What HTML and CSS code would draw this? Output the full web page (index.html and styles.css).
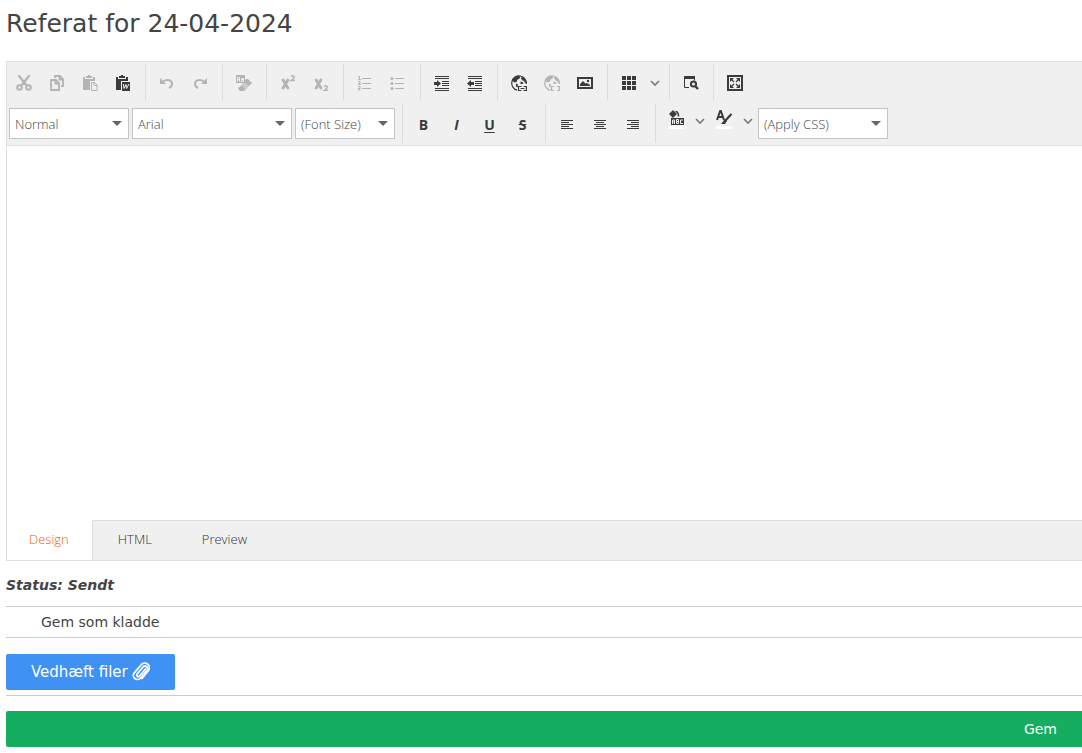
FILE: index.html
```html
<!DOCTYPE html>
<html lang="da">
<head>
    <meta charset="UTF-8">
    <meta name="viewport" content="width=device-width, initial-scale=1.0">
    <title>Referat</title>
    <link rel="stylesheet" href="styles.css">
</head>
<body>

<h1>Referat for 24-04-2024</h1>

<div class="editor">
    <div class="toolbar">
        <div class="toolbar-row">
            <div class="group first">
                <button class="tool" aria-label="Cut" disabled>
                    <svg viewBox="0 0 16 16"><path d="M2.500 0l7 9.500M13.500 0l-7 9.500" stroke-width="2.200"/><circle cx="3.500" cy="12.500" r="2.300" stroke-width="2"/><circle cx="12.500" cy="12.500" r="2.300" stroke-width="2"/><path d="M7 8.500L5 10.500M9 8.500l2 2" stroke-width="2"/></svg>
                </button>
                <button class="tool" aria-label="Copy" disabled>
                    <svg viewBox="0 0 16 16"><path d="M2 5h5l3 3v7H2zM6.500 5v3.500H10M6 3V1h5l3 3v7h-2M10.500 1v3.500H14" stroke-width="1.800"/></svg>
                </button>
                <button class="tool" aria-label="Paste" disabled>
                    <svg viewBox="0 0 16 16"><path class="solid" d="M1 2h2v2h8V2h2v4H8v9H1zM4 1h2V0h2v1h2v2H4z"/><path d="M9.500 7.500h3l2.500 2.500v5.500H9.500zM12 7.500V10.500h3"/></svg>
                </button>
                <button class="tool" aria-label="Paste from Word">
                    <svg viewBox="0 0 16 16"><path class="solid" d="M1 2h2v2h8V2h2v4H6v9H1zM4 1h2V0h2v1h2v2H4zM7 7h8v9H7z"/><path class="cut" d="M8.500 9l.5 4.500 2-4 .5 4 2.500-4.500"/></svg>
                </button>
            </div>
            <div class="group">
                <button class="tool" aria-label="Undo" disabled>
                    <svg viewBox="0 0 16 16"><path class="solid" d="M1 3v6h6z"/><path d="M4 6.500c4-3 9-1.500 9 2.500 0 2-1 3-3 4" stroke-width="2"/></svg>
                </button>
                <button class="tool" aria-label="Redo" disabled>
                    <svg viewBox="0 0 16 16"><path class="solid" d="M15 3v6H9z"/><path d="M12 6.500c-4-3-9-1.500-9 2.500 0 2 1 3 3 4" stroke-width="2"/></svg>
                </button>
            </div>
            <div class="group">
                <button class="tool" aria-label="Remove format" disabled>
                    <svg viewBox="0 0 16 16"><path class="solid" d="M0 0h9v8H0z"/><path class="cut" d="M1.500 6.500v-4h2v4M1.500 4.500h2M5.500 3.500h2v3h-2v-2h2"/><path class="solid" d="M10 4h2l4 4-3 3-5-4z"/><path class="solid soft" d="M8 7l5 4-4 5H5l-3-2.500z"/><path class="solid" d="M2 13l4-2.500 3 3L7 16H4z"/></svg>
                </button>
            </div>
            <div class="group">
                <button class="tool" aria-label="Superscript" disabled>
                    <svg viewBox="0 0 16 16"><path d="M2.500 4l6 10M8.500 4l-6 10" stroke-width="2.800"/><path d="M11 1.500q2-1.500 3 0t-3 4h4" stroke-width="1.400"/></svg>
                </button>
                <button class="tool" aria-label="Subscript" disabled>
                    <svg viewBox="0 0 16 16"><path d="M2.500 4l6 10M8.500 4l-6 10" stroke-width="2.800"/><path d="M11 11.500q2-1.500 3 0t-3 4h4" stroke-width="1.400"/></svg>
                </button>
            </div>
            <div class="group">
                <button class="tool" aria-label="Numbered list" disabled>
                    <svg viewBox="0 0 16 16"><path d="M5 3.500h9M5 8.500h9M5 13.500h9M1 1.500h1.500v3M1 4.500h3M1 6.500h2v2H1.500M1 9.500h3M1 11.500h2v3.500H1M1 13.500h2"/></svg>
                </button>
                <button class="tool" aria-label="Bullet list" disabled>
                    <svg viewBox="0 0 16 16"><path d="M5 3.500h9M5 8.500h9M5 13.500h9"/><circle class="solid" cx="2" cy="3.500" r="1.500"/><circle class="solid" cx="2" cy="8.500" r="1.500"/><circle class="solid" cx="2" cy="13.500" r="1.500"/></svg>
                </button>
            </div>
            <div class="group">
                <button class="tool" aria-label="Indent">
                    <svg viewBox="0 0 16 16"><path d="M1 1.500h14M1 3.500h14M8 6.500h7M8 8.500h7M8 10.500h7M1 13.500h14M1 15.500h14"/><path class="solid" d="M0 7h3V5l4 3.500L3 12v-2H0z"/></svg>
                </button>
                <button class="tool" aria-label="Outdent">
                    <svg viewBox="0 0 16 16"><path d="M1 1.500h14M1 3.500h14M8 6.500h7M8 8.500h7M8 10.500h7M1 13.500h14M1 15.500h14"/><path class="solid" d="M7 7H4V5L0 8.500 4 12v-2h3z"/></svg>
                </button>
            </div>
            <div class="group">
                <button class="tool" aria-label="Insert link">
                    <svg viewBox="0 0 16 16"><path d="M6 15.200A7.300 7.300 0 1 1 15.300 9" stroke-width="1.200"/><path class="solid" d="M1 5.500L3.500 2 7 .5 9.500 2 8 4 6.500 4.500 5.500 7 3.500 7.500zM5 8.500l2 1-.5 3-1.500-1zM11 1.500l2.500 1.500 2 5H14l-1-2-1.500-.5L10 3.500zM9.500 6.500l2 .5 1 2h-3z"/><path d="M10.500 11.500H7.500v4h3M12.500 11.500H15.400v4h-2.900M9.500 13.500h4" stroke-width="1.200"/></svg>
                </button>
                <button class="tool" aria-label="Remove link" disabled>
                    <svg viewBox="0 0 16 16"><path d="M6 15.200A7.300 7.300 0 1 1 15.300 9" stroke-width="1.200"/><path class="solid" d="M1 5.500L3.500 2 7 .5 9.500 2 8 4 6.500 4.500 5.500 7 3.500 7.500zM5 8.500l2 1-.5 3-1.500-1zM11 1.500l2.500 1.500 2 5H14l-1-2-1.500-.5L10 3.500zM9.500 6.500l2 .5 1 2h-3z"/><path d="M10 11.500H7.500v4H10M13 11.500h2.400v4H13" stroke-width="1.200"/></svg>
                </button>
                <button class="tool" aria-label="Insert image">
                    <svg viewBox="0 0 16 16"><path d="M1 3h14v10H1z" stroke-width="2"/><path class="solid" d="M3 11V9l3-3 2.500 2.500L10 8l3 2v1z"/><circle class="solid" cx="11" cy="6" r="1.200"/></svg>
                </button>
            </div>
            <div class="group">
                <button class="tool" aria-label="Insert table">
                    <svg viewBox="0 0 16 16"><path class="solid" d="M1 1h4v4H1zM6 1h4v4H6zM11 1h4v4h-4zM1 6h4v4H1zM6 6h4v4H6zM11 6h4v4h-4zM1 11h4v4H1zM6 11h4v4H6zM11 11h4v4h-4z"/></svg>
                </button>
                <button class="arrow" aria-label="Table options">
                    <svg viewBox="0 0 10 16"><path d="M1 6l4 4 4-4"/></svg>
                </button>
            </div>
            <div class="group">
                <button class="tool" aria-label="Find and replace">
                    <svg viewBox="0 0 16 16"><path class="solid" d="M1 1h11v3H1z"/><path d="M1.500 2v10.500H6M11.500 3v2.500"/><circle cx="10.500" cy="9" r="2.600" stroke-width="2"/><path d="M12 11l3 3" stroke-width="2.400"/></svg>
                </button>
            </div>
            <div class="group last">
                <button class="tool" aria-label="Fullscreen">
                    <svg viewBox="0 0 16 16"><path d="M1 1h14v14H1z" stroke-width="2"/><path class="solid" d="M3 3h4L3 7zM13 3v4L9 3zM3 13V9l4 4zM13 13H9l4-4z"/><path d="M4 4l3 3M12 4L9 7M4 12l3-3M12 12L9 9" stroke-width="1.200"/></svg>
                </button>
            </div>
        </div>

        <div class="toolbar-row second">
            <div class="group selects">
                <div class="dropdown paragraph">
                    <select aria-label="Paragraph"><option>Normal</option></select>
                </div>
                <div class="dropdown font-name">
                    <select aria-label="Font name"><option>Arial</option></select>
                </div>
                <div class="dropdown font-size">
                    <select aria-label="Font size"><option>(Font Size)</option></select>
                </div>
            </div>
            <div class="group">
                <button class="tool letter">B</button>
                <button class="tool letter italic">I</button>
                <button class="tool letter underline">U</button>
                <button class="tool letter strike">S</button>
            </div>
            <div class="group">
                <button class="tool" aria-label="Align left">
                    <svg viewBox="0 0 16 16"><path d="M2 3.500h12M2 5.500h8M2 7.500h12M2 9.500h8M2 11.500h12"/></svg>
                </button>
                <button class="tool" aria-label="Align center">
                    <svg viewBox="0 0 16 16"><path d="M2 3.500h12M4 5.500h8M2 7.500h12M4 9.500h8M2 11.500h12"/></svg>
                </button>
                <button class="tool" aria-label="Align right">
                    <svg viewBox="0 0 16 16"><path d="M2 3.500h12M6 5.500h8M2 7.500h12M6 9.500h8M2 11.500h12"/></svg>
                </button>
            </div>
            <div class="group last colors">
                <button class="tool color" aria-label="Background color">
                    <svg viewBox="0 0 16 16"><path class="solid" d="M1 4l4-4 4 4-4 4z"/><path d="M7.500 1.500q3 0 3 5" stroke-width="1.600"/><path class="solid" d="M3 8h13v7H3z"/><path class="cut" d="M4.500 14v-4h2v4M4.500 12h2M8.500 9.500v4h2v-4zM8.500 11.500h2M15 10h-2.500v3.500H15"/></svg>
                    <span class="swatch"></span>
                </button>
                <button class="arrow" aria-label="Background color options">
                    <svg viewBox="0 0 10 16"><path d="M1 6l4 4 4-4"/></svg>
                </button>
                <button class="tool color" aria-label="Font color">
                    <svg viewBox="0 0 16 16"><path d="M1 10L4.500 0 8 10M2.500 7h4.500" stroke-width="2"/><path d="M15.500 4L9 11" stroke-width="2.200"/><path class="solid" d="M9 9l2 2-2 3H5z"/></svg>
                    <span class="swatch"></span>
                </button>
                <button class="arrow" aria-label="Font color options">
                    <svg viewBox="0 0 10 16"><path d="M1 6l4 4 4-4"/></svg>
                </button>
                <div class="dropdown css-class">
                    <select aria-label="CSS class"><option>(Apply CSS)</option></select>
                </div>
            </div>
        </div>
    </div>

    <div class="content" contenteditable="true"></div>

    <div class="tabs">
        <button class="tab active">Design</button>
        <button class="tab">HTML</button>
        <button class="tab">Preview</button>
    </div>
</div>

<p class="status">Status: Sendt</p>

<div class="draft">
    <button class="draft-button">Gem som kladde</button>
</div>

<div class="attach">
    <button class="attach-button">
        Vedhæft filer
        <svg viewBox="0 0 18 20"><path d="M13.500 7L7.500 14a1.500 1.500 0 0 1-2.400-2L11 5a2.600 2.600 0 0 1 4 3.500L8.500 16a4 4 0 0 1-6.200-5.200L9 3a4.400 4.400 0 0 1 7.500 5.500L10 16.500"/></svg>
    </button>
</div>

<button class="save-button">Gem</button>

</body>
</html>
```

FILE: styles.css
```css
* {
    box-sizing: border-box;
}
body {
    margin: 0;
    padding-left: 6px;
    font-family: Verdana, "DejaVu Sans", sans-serif;
    font-size: 14px;
    color: #444;
    background-color: #fff;
}
button {
    margin: 0;
    padding: 0;
    border: none;
    background: none;
    font: inherit;
    color: inherit;
    cursor: pointer;
}
h1 {
    margin: 0 0 13px;
    font-size: 25px;
    font-weight: normal;
    line-height: 48px;
}

/* editor */
.editor {
    border: 1px solid #e0e0e0;
    border-right: none;
    font-family: "Segoe UI Light", "Open Sans", sans-serif;
    font-weight: 300;
}
.toolbar {
    padding: 2px 0;
    background-color: #f0f0f0;
    border-bottom: 1px solid #e0e0e0;
}
.toolbar-row {
    display: flex;
    height: 36px;
}
.toolbar-row.second {
    height: 39px;
    margin-top: 4px;
}
.group {
    display: flex;
    align-items: center;
    padding: 0 5px;
    border-right: 1px solid #dcdcdc;
}
.group.first {
    padding-left: 1px;
}
.group.last {
    border-right: none;
}
.group.selects {
    gap: 3px;
    padding: 0 7px 0 2px;
}
.tool,
.arrow {
    display: flex;
    align-items: center;
    justify-content: center;
    width: 33px;
    height: 36px;
    padding: 2px 1px 0 0;
    color: #3b3b3b;
}
.arrow {
    width: 18px;
    color: #777;
}
.tool:disabled {
    color: #b4b4b4;
}
.tool svg {
    width: 16px;
    height: 16px;
}
.arrow svg {
    width: 10px;
    height: 16px;
}
.arrow path {
    stroke-width: 1.6;
}
svg {
    display: block;
    fill: none;
    stroke: currentColor;
}
.solid {
    fill: currentColor;
    stroke: none;
}
.soft {
    opacity: 0.6;
}
.cut {
    stroke: #f0f0f0;
}
.letter {
    padding-right: 2px;
    font-family: "Open Sans", sans-serif;
    font-size: 14px;
    font-weight: 700;
}
.italic {
    font-style: italic;
}
.underline {
    text-decoration: underline;
    text-underline-offset: 2px;
}
.strike {
    text-decoration: line-through;
}
.color {
    flex-direction: column;
    width: 30px;
}
.colors .tool,
.colors .arrow {
    height: 30px;
    padding: 0;
}
.colors .arrow {
    height: 34px;
}
.colors {
    align-items: flex-start;
}
.swatch {
    width: 16px;
    height: 3px;
    background-color: #fff;
}
.dropdown {
    position: relative;
    height: 31px;
}
.colors .dropdown {
    align-self: center;
    margin-left: 1px;
}
.dropdown::after {
    content: "";
    position: absolute;
    top: 13px;
    right: 7px;
    border: 5px solid transparent;
    border-top-color: #666;
    border-bottom: none;
    pointer-events: none;
}
.dropdown select {
    width: 100%;
    height: 100%;
    padding: 0 20px 0 5px;
    border: 1px solid #c4c4c4;
    border-radius: 0;
    appearance: none;
    background-color: #fff;
    font: inherit;
    font-size: 13px;
    color: #444;
}
.paragraph {
    width: 120px;
}
.font-name {
    width: 160px;
}
.font-size {
    width: 100px;
}
.css-class {
    width: 130px;
}
.content {
    height: 374px;
    outline: none;
}
.tabs {
    display: flex;
    height: 40px;
    background-color: #f0f0f0;
}
.tabs::after {
    content: "";
    flex: 1;
    border-top: 1px solid #dcdcdc;
}
.tab {
    padding: 0 25px 4px;
    border-top: 1px solid #dcdcdc;
    font-size: 13px;
    color: #333;
}
.tab.active {
    padding: 0 23px 4px 22px;
    border-top-color: #fff;
    border-right: 1px solid #dcdcdc;
    background-color: #fff;
    color: #f0600c;
}

/* actions */
.status {
    margin: 0;
    font-weight: bold;
    font-style: italic;
    line-height: 45px;
    height: 45px;
    padding-top: 2px;
}
.draft {
    border-top: 1px solid #ccc;
    border-bottom: 1px solid #ccc;
}
.draft-button {
    display: block;
    height: 30px;
    padding: 0 35px;
}
.attach {
    padding: 16px 0 5px;
    border-bottom: 1px solid #ccc;
}
.attach-button {
    display: flex;
    align-items: center;
    gap: 4px;
    height: 36px;
    padding: 0 25px;
    border-radius: 2px;
    background-color: #3f92f4;
    font-size: 15px;
    color: #fff;
}
.attach-button svg {
    width: 18px;
    height: 20px;
    stroke-width: 1.8;
    stroke-linecap: round;
}
.save-button {
    display: block;
    width: 100%;
    height: 36px;
    margin-top: 15px;
    padding: 0 25px;
    border-radius: 2px 0 0 2px;
    background-color: #15ae60;
    color: #fff;
    text-align: right;
}
```
